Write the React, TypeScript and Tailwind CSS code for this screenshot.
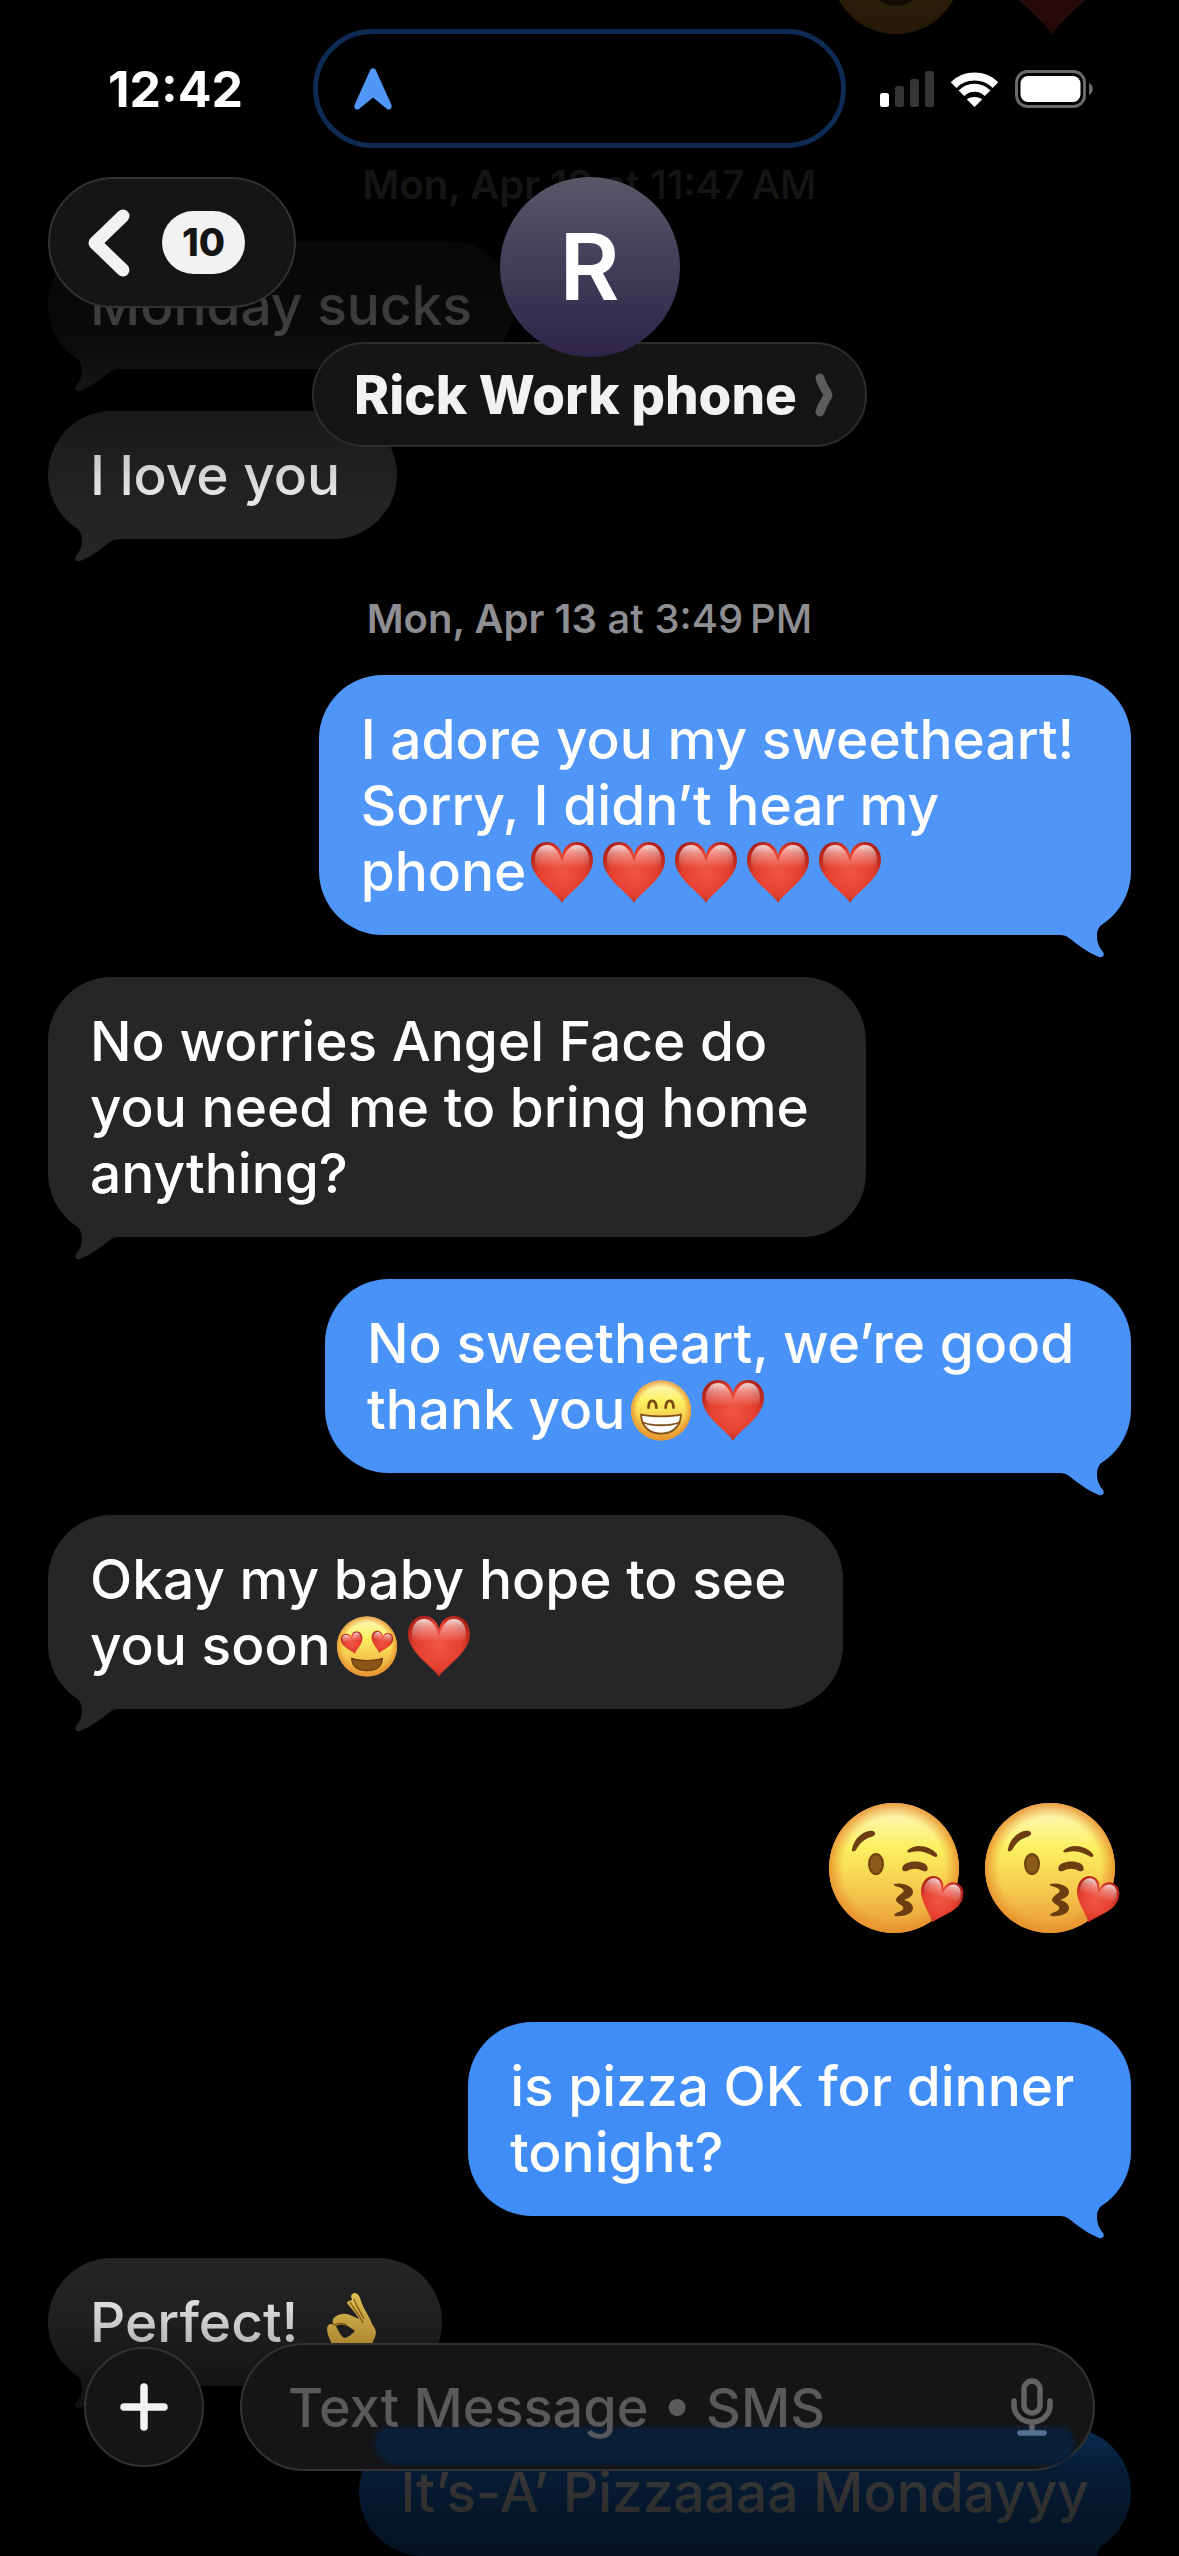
import React from 'react';
import clsx from 'clsx';

interface Message {
  id: number;
  kind: 'sent' | 'received' | 'emoji' | 'time';
  text: string;
  time?: string;
  bubble?: string;
  tail?: string;
}

const GRAY = { bubble: 'bg-[#262628]', tail: 'text-[#262628]' };

const messages: Message[] = [
  { id: 1, kind: 'emoji', text: '😮❤️' },
  { id: 2, kind: 'time', text: 'Mon, Apr 13', time: 'at 11:47\u202fAM' },
  { id: 3, kind: 'received', text: 'Monday sucks', ...GRAY },
  { id: 4, kind: 'received', text: 'I love you ', ...GRAY },
  { id: 5, kind: 'time', text: 'Mon, Apr 13', time: 'at 3:49\u202fPM' },
  {
    id: 6,
    kind: 'sent',
    text: 'I adore you my sweetheart! \nSorry, I didn’t hear my\nphone❤️❤️❤️❤️❤️',
    bubble: 'bg-[#5096f8]',
    tail: 'text-[#5096f8]',
  },
  { id: 7, kind: 'received', text: 'No worries Angel Face do\nyou need me to bring home \nanything?', ...GRAY },
  {
    id: 8,
    kind: 'sent',
    text: 'No sweetheart, we’re good \nthank you😁❤️',
    bubble: 'bg-[#4993f8]',
    tail: 'text-[#4993f8]',
  },
  { id: 9, kind: 'received', text: 'Okay my baby hope to see \nyou soon😍❤️', ...GRAY },
  { id: 10, kind: 'emoji', text: '😘😘' },
  {
    id: 11,
    kind: 'sent',
    text: 'is pizza OK for dinner \ntonight?',
    bubble: 'bg-[#408df7]',
    tail: 'text-[#408df7]',
  },
  { id: 12, kind: 'received', text: 'Perfect! 👌 ', ...GRAY },
  {
    id: 13,
    kind: 'sent',
    text: 'It’s-A’ Pizzaaaa Mondayyy',
    bubble: 'bg-[#1f80f5]',
    tail: 'text-[#1f80f5]',
  },
];

const HEART = 'M31 61C26 51 0 37 0 18C0 7 7 0 16 0C23 0 29 4 31 13C33 4 39 0 46 0C55 0 62 7 62 18C62 37 36 51 31 61Z';

// Gradients shared by every emoji drawing
const EmojiDefs = () => (
  <svg className="absolute h-0 w-0" aria-hidden="true">
    <defs>
      <linearGradient id="face" x1="0" y1="0" x2="0" y2="1">
        <stop offset="0" stopColor="#fff9c9" />
        <stop offset="0.35" stopColor="#fcf060" />
        <stop offset="0.65" stopColor="#f6cb4e" />
        <stop offset="1" stopColor="#e99a36" />
      </linearGradient>
      <radialGradient id="rim" cx="0.5" cy="0.5" r="0.5">
        <stop offset="0.78" stopColor="#ea9a30" stopOpacity="0" />
        <stop offset="1" stopColor="#e8922e" stopOpacity="0.9" />
      </radialGradient>
      <radialGradient id="heart" cx="0.5" cy="0.5" r="0.6">
        <stop offset="0" stopColor="#ef5644" />
        <stop offset="0.6" stopColor="#e6402f" />
        <stop offset="1" stopColor="#a81f16" />
      </radialGradient>
      <linearGradient id="gloss" gradientUnits="userSpaceOnUse" x1="0" y1="2" x2="0" y2="26">
        <stop offset="0" stopColor="#fff" stopOpacity="0.85" />
        <stop offset="0.4" stopColor="#fff" stopOpacity="0.4" />
        <stop offset="1" stopColor="#fff" stopOpacity="0" />
      </linearGradient>
      <linearGradient id="hand" x1="0" y1="0" x2="0" y2="1">
        <stop offset="0" stopColor="#f8d75f" />
        <stop offset="1" stopColor="#efb63e" />
      </linearGradient>
    </defs>
  </svg>
);

const HeartShape = () => (
  <g>
    <path d={HEART} fill="url(#heart)" />
    <path
      d="M31 55C26 43 4 34 4 18C4 9 9 3 16 3C23 3 28 9 31 20C34 9 39 3 46 3C53 3 58 9 58 18C58 34 36 43 31 55Z"
      fill="url(#gloss)"
    />
  </g>
);

const Face = ({ children }: { children: React.ReactNode }) => (
  <g>
    <circle cx="65" cy="66" r="65" fill="url(#face)" />
    <circle cx="65" cy="66" r="65" fill="url(#rim)" />
    {children}
  </g>
);

const Grin = () => (
  <Face>
    <g fill="none" stroke="#7a4a12" strokeWidth="6" strokeLinecap="round">
      <path d="M38 60C38 40 54 40 55 60" />
      <path d="M75 60C76 40 92 40 92 60" />
    </g>
    <path d="M22 75C44 80 86 80 108 75C108 100 90 116 65 116C40 116 22 100 22 75Z" fill="#fff" stroke="#80501a" strokeWidth="4" />
    <path d="M26 92C46 100 84 100 104 92" fill="none" stroke="#80501a" strokeWidth="4" />
  </Face>
);

const OpenMouth = () => (
  <Face>
    <g fill="#7a4a12">
      <ellipse cx="43" cy="50" rx="8" ry="11" />
      <ellipse cx="87" cy="50" rx="8" ry="11" />
      <ellipse cx="65" cy="85" rx="23" ry="18" />
    </g>
  </Face>
);

const HeartEyes = () => (
  <Face>
    <g transform="translate(10 36) rotate(-12 22 22) scale(0.76)">
      <HeartShape />
    </g>
    <g transform="translate(73 34) rotate(12 22 22) scale(0.76)">
      <HeartShape />
    </g>
    <path d="M32 92C50 98 80 98 98 92C98 110 84 118 65 118C46 118 32 110 32 92Z" fill="#8a5518" stroke="#6f400f" strokeWidth="3" />
  </Face>
);

const Kiss = () => (
  <Face>
    <g fill="#6b3d10">
      <path d="M23 47C25 36 36 27 44 29C48 31 46 34 42 35C35 37 31 41 27 48C25 50 22 50 23 47Z" />
      <path d="M79 48C87 41 101 44 108 52C109 55 107 56 104 54C97 50 89 48 83 50C79 51 77 50 79 48Z" />
      <path d="M74 64C78 58 95 58 98 64C100 69 97 70 94 69C88 66 84 66 78 69C74 70 72 68 74 64Z" />
      <path d="M65 82C74 80 84 84 84 90C84 94 80 96 75 98C80 99 84 102 84 106C84 112 74 115 66 114C64 112 67 111 72 109C75 107 75 105 72 103C69 101 67 100 67 98C67 96 69 94 72 92C75 90 76 88 72 86C68 84 64 84 65 82Z" />
    </g>
    <ellipse cx="47" cy="62" rx="7" ry="10" fill="#8a5a18" stroke="#6f4210" strokeWidth="2" />
    <g transform="translate(97 71) rotate(18) scale(0.69 0.74)">
      <HeartShape />
    </g>
  </Face>
);

const OkHand = () => (
  <g>
    <path
      fillRule="evenodd"
      fill="url(#hand)"
      d="M28 0C31 0 33 4 34 8C37 17 43 24 45 31C51 38 49 43 46 48C45 53 44 58 42 64H11C6 52 0 43 0 36C0 31 4 30 7 32C3 27 8 22 15 21C22 20 26 24 32 26C29 20 22 13 20 10C21 7 24 8 25 7C23 2 25 0 28 0ZM9 33C13 30 20 31 28 38C24 42 20 45 17 45C13 42 11 37 9 33Z"
    />
    <path d="M23 9C27 16 32 21 36 30M27 6C30 15 35 21 37 26M7 32C12 30 16 30 20 32" fill="none" stroke="#a66f1c" strokeWidth="1.5" />
  </g>
);

const emojis: { [char: string]: { label: string; viewBox: string; art: React.ReactNode } } = {
  '❤️': { label: 'red heart', viewBox: '0 0 62 61', art: <HeartShape /> },
  '😁': { label: 'grinning face', viewBox: '-2 0 134 132', art: <Grin /> },
  '😮': { label: 'open mouth', viewBox: '-2 0 134 132', art: <OpenMouth /> },
  '😍': { label: 'heart eyes', viewBox: '-2 0 134 132', art: <HeartEyes /> },
  '😘': { label: 'blowing a kiss', viewBox: '0 0 134 132', art: <Kiss /> },
  '👌': { label: 'OK hand', viewBox: '-14 0 72 61', art: <OkHand /> },
};

const splitEmoji = (text: string) => text.split(/(❤️|😁|😮|😍|😘|👌)/u).filter(Boolean);

const RichText = ({ text, size }: { text: string; size: string }) => (
  <>
    {splitEmoji(text).map((part, i) => {
      const emoji = emojis[part];
      if (!emoji) return <span key={i}>{part}</span>;
      return (
        <svg key={i} viewBox={emoji.viewBox} className={size} role="img" aria-label={emoji.label}>
          {emoji.art}
        </svg>
      );
    })}
  </>
);

const Tail = ({ className }: { className?: string }) => (
  <svg viewBox="0 0 80 60" className={clsx('absolute -bottom-6 h-[60px] w-20 fill-current', className)} aria-hidden="true">
    <path d="M14 6C22 22 34 24 34 37C34 45 31 49 28 53C26 56 28 59 32 58C44 53 53 46 62 39C66 36 68 36 74 36V6Z" />
  </svg>
);

const MessageRow = ({ message }: { message: Message }) => {
  if (message.kind === 'time') {
    return (
      <p className="-mb-6 shrink-0 text-center text-[40px] leading-[76px] font-medium text-[#8e8e93]">
        <span className="font-semibold">{message.text}</span> {message.time}
      </p>
    );
  }

  if (message.kind === 'emoji') {
    return (
      <div className="flex h-[229px] shrink-0 items-center justify-end gap-[22px] pt-1 pr-3 [&+p]:mt-6">
        <RichText text={message.text} size="h-[132px] w-[134px] overflow-visible" />
      </div>
    );
  }

  const sent = message.kind === 'sent';
  return (
    <div className={clsx('flex shrink-0', sent ? 'justify-end' : 'justify-start')}>
      <div className={clsx('relative rounded-[64px] px-[42px] py-[31px]', message.bubble)}>
        <Tail className={clsx(message.tail, sent ? 'right-0 -scale-x-100' : 'left-0')} />
        <p className="relative text-[55px] leading-[66px] font-medium whitespace-pre text-white">
          <RichText text={message.text} size="inline-block h-[61px] w-[72px] align-[-12px] overflow-visible" />
        </p>
      </div>
    </div>
  );
};

const StatusBar = () => (
  <div className="flex items-center pr-[86px] pl-[108px] pt-[29px]">
    <time className="text-[50px] leading-[60px] font-bold text-white">12:42</time>
    <div className="mr-[34px] ml-[70px] flex h-[119px] flex-1 items-center rounded-full border-[5px] border-[#0f2b54] bg-black pl-9">
      <svg viewBox="0 0 38 42" className="h-[42px] w-[38px]" aria-hidden="true">
        <path
          d="M16 2.500C17 -0.500 21 -0.500 22 2.500L37.500 37C38.500 40.500 35.500 43 33 41L19 29.500L5 41C2.500 43 -0.500 40.500 0.500 37Z"
          fill="#5097f8"
        />
      </svg>
    </div>
    <div className="flex items-center gap-[17px]">
      <svg viewBox="0 0 54 36" className="h-9 w-[54px]" aria-hidden="true">
        <rect x="0" y="22" width="9" height="14" rx="2.500" fill="#fff" />
        <g fill="#353535">
          <rect x="15" y="15" width="9" height="21" rx="2.500" />
          <rect x="30" y="8" width="9" height="28" rx="2.500" />
          <rect x="45" y="0" width="9" height="36" rx="2.500" />
        </g>
      </svg>
      <svg viewBox="0 0 47 36" className="h-9 w-[47px]" aria-hidden="true">
        <g fill="none" stroke="#fff" strokeWidth="8">
          <path d="M2.600 14.100A30 30 0 0 1 44.400 14.100" />
          <path d="M10.400 22.200A18.500 18.500 0 0 1 36.600 22.200" />
        </g>
        <path d="M23.500 36L15.900 28.600C18 25 29 25 31.100 28.600Z" fill="#fff" />
      </svg>
      <svg viewBox="0 0 78 38" className="h-[38px] w-[78px]" aria-hidden="true">
        <rect x="1.500" y="1.500" width="68" height="35" rx="11" fill="none" stroke="#6a6a6a" strokeWidth="3" />
        <rect x="5.500" y="6" width="60" height="26" rx="7.500" fill="#fff" />
        <path d="M74 13C79 15 79 23 74 25Z" fill="#6a6a6a" />
      </svg>
    </div>
  </div>
);

const Header = () => (
  <header className="absolute inset-x-0 top-0">
    <StatusBar />
    <div className="grid grid-cols-[1fr_auto_1fr] items-start px-12 pt-[29px]">
      <button
        type="button"
        aria-label="Back, 10 unread"
        className="flex h-[131px] w-[248px] items-center gap-8 rounded-full border-2 border-[#323232] bg-[#151515] pl-[38px]"
      >
        <svg viewBox="0 0 42 68" className="h-[68px] w-[42px]" fill="none" stroke="#f2f2f2" aria-hidden="true">
          <path d="M35 7L7 34L35 61" strokeWidth="13" strokeLinecap="round" strokeLinejoin="round" />
        </svg>
        <span className="flex h-[63px] w-[83px] items-center justify-center rounded-full bg-[#f2f2f2] text-[38px] font-extrabold text-[#151515]">
          10
        </span>
      </button>
      <div className="flex flex-col items-center">
        <div className="z-10 flex size-[180px] items-center justify-center rounded-full bg-linear-to-b from-[#5a5768] to-[#2d2448]">
          <span className="text-[92px] leading-none font-semibold text-white">R</span>
        </div>
        <button
          type="button"
          className="-mt-[15px] flex h-[105px] items-center gap-[18px] rounded-full border-2 border-[#2c2c2c] bg-[#151515] pr-8 pl-10"
        >
          <span className="text-[53px] leading-[60px] font-extrabold text-[#f2f2f2]">Rick Work phone</span>
          <svg viewBox="0 0 18 44" className="h-11 w-[18px]" fill="none" stroke="#5c5c5c" aria-hidden="true">
            <path d="M5 5C7 13 13 20 13 22C13 24 7 31 5 39" strokeWidth="9" strokeLinecap="round" strokeLinejoin="round" />
          </svg>
        </button>
      </div>
    </div>
  </header>
);

const Composer = () => (
  <form className="absolute inset-x-0 bottom-[85px] flex items-center gap-9 px-[84px]">
    <button
      type="button"
      aria-label="Add attachment"
      className="flex size-[120px] shrink-0 items-center justify-center rounded-full border-2 border-[#323232] bg-[#151515]"
    >
      <svg viewBox="0 0 48 48" className="size-12" stroke="#f2f2f2" strokeWidth="7.500" strokeLinecap="round" aria-hidden="true">
        <path d="M24 4V44M4 24H44" />
      </svg>
    </button>
    <div className="relative flex h-32 min-w-0 flex-1 items-center rounded-full border-2 border-[#323232] bg-[#151515] pr-10 pl-[46px]">
      {/* Color of the message underneath showing through the glass */}
      <div className="absolute right-[18px] bottom-1 left-[132px] h-[38px] rounded-t-[24px] rounded-b-[36px] bg-[#0a1f38] blur-[2px]" />
      <input
        type="text"
        aria-label="Text Message"
        placeholder="Text Message • SMS"
        className="relative w-full min-w-0 flex-1 bg-transparent text-[54px] font-medium text-white outline-none placeholder:text-[#5a5a5c]"
      />
      <button type="button" aria-label="Dictate" className="relative shrink-0">
        <svg viewBox="0 0 42 58" className="h-[58px] w-[42px]" fill="none" stroke="#626264" strokeWidth="5.500" strokeLinecap="round" aria-hidden="true">
          <rect x="13" y="3" width="16" height="32" rx="8" />
          <path d="M3 23V27C3 37 11 44 21 44C31 44 39 37 39 27V23M21 44V54" />
          <path d="M9 55H33" stroke="#56708f" />
        </svg>
      </button>
    </div>
  </form>
);

export default function App() {
  return (
    <div className="relative h-screen overflow-hidden bg-black font-['Inter',sans-serif]">
      <EmojiDefs />
      <main className="flex h-full flex-col justify-end gap-[42px] px-12">
        {messages.map((message) => (
          <MessageRow key={message.id} message={message} />
        ))}
      </main>
      <div className="pointer-events-none absolute inset-x-0 top-0 h-[570px] bg-[linear-gradient(to_bottom,rgb(0_0_0/0.83)_0,rgb(0_0_0/0.86)_180px,rgb(0_0_0/0.83)_240px,rgb(0_0_0/0.75)_330px,rgb(0_0_0/0.56)_370px,rgb(0_0_0/0.34)_410px,rgb(0_0_0/0.1)_495px,rgb(0_0_0/0)_570px)]" />
      <div className="pointer-events-none absolute inset-x-0 bottom-0 h-[320px] bg-[linear-gradient(to_top,rgb(0_0_0/0.86)_0,rgb(0_0_0/0.79)_84px,rgb(0_0_0/0.68)_126px,rgb(0_0_0/0.48)_170px,rgb(0_0_0/0.28)_213px,rgb(0_0_0/0.14)_250px,rgb(0_0_0/0)_320px)]" />
      <Header />
      <Composer />
    </div>
  );
}
